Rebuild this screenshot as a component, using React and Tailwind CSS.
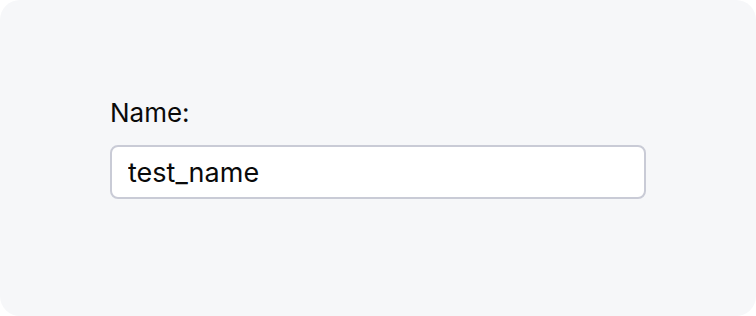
import React, { useState } from "react";

const App = () => {
  const [name, setName] = useState("test_name");

  return (
    <div className="w-[756px] h-[316px] bg-white">
      <div
        className="w-full h-full rounded-[20px] bg-[#f6f7f9] px-[110px] pt-[97px]"
        style={{ fontFamily: "Inter, 'Liberation Sans', sans-serif" }}
      >
        <label className="block text-[26px] leading-[32px] text-[#0a0a0a] mb-[16px]">
          Name:
        </label>
        <input
          type="text"
          value={name}
          onChange={(e) => setName(e.target.value)}
          className="w-[536px] h-[54px] bg-white border-2 border-[#c9cbd6] rounded-[8px] px-[16px] text-[27px] text-[#0a0a0a] focus:outline-none"
        />
      </div>
    </div>
  );
};

export default App;
